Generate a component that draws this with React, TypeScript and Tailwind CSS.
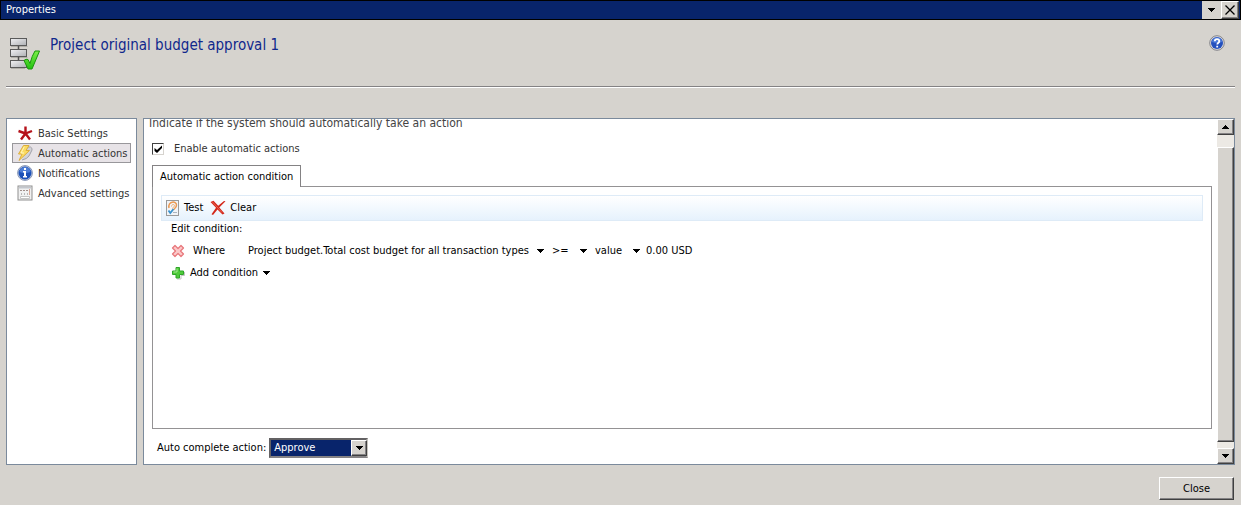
import type { ReactNode } from 'react';

const raised =
  'border border-t-white border-l-white border-r-[#404040] border-b-[#404040] bg-[#d6d3ce] shadow-[inset_-1px_-1px_0_#848284]';

function Caret({ up = false }: { up?: boolean }) {
  return (
    <svg width="7" height="4" viewBox="0 0 7 4" shapeRendering="crispEdges" aria-hidden="true" className="shrink-0">
      <path d={up ? 'M3 0h1v1h1v1h1v1h1v1H0V3h1V2h1V1h1z' : 'M0 0h7v1H6v1H5v1H4v1H3V3H2V2H1V1H0z'} fill="#000" />
    </svg>
  );
}

function WorkflowIcon() {
  return (
    <svg width="33" height="34" viewBox="0 0 33 34" aria-hidden="true" className="shrink-0">
      <defs>
        <linearGradient id="box" x1="0" y1="0" x2="1" y2="1">
          <stop offset="0" stopColor="#f2f2f4" />
          <stop offset="1" stopColor="#aeb0b4" />
        </linearGradient>
        <linearGradient id="tick" x1="0" y1="0" x2="0" y2="1">
          <stop offset="0" stopColor="#7df04a" />
          <stop offset="1" stopColor="#22c010" />
        </linearGradient>
      </defs>
      <path d="M2 8.500h16.500M2 19.500h16.500M2 30.500h14" stroke="#b0aea8" />
      <path d="M9.500 8v3M9.500 19v3" stroke="#4f4f4f" strokeWidth="1.500" />
      <rect x="1.500" y="0.500" width="16" height="7" fill="url(#box)" stroke="#5a5a5a" />
      <rect x="1.500" y="11.500" width="16" height="7" fill="url(#box)" stroke="#5a5a5a" />
      <rect x="1.500" y="22.500" width="16" height="7" fill="url(#box)" stroke="#5a5a5a" />
      <path d="M15 22.500q2-2 4-1l2 4q2-8 5-12.500h4.500l-7.500 18h-4z" fill="url(#tick)" stroke="#1a960d" strokeLinejoin="round" />
    </svg>
  );
}

function HelpIcon() {
  return (
    <svg width="16" height="16" viewBox="0 0 16 16" aria-hidden="true">
      <circle cx="8" cy="8" r="7.300" fill="#dcdce0" stroke="#85858a" />
      <circle cx="8" cy="8" r="6" fill="#2450bd" />
      <path d="M3 7a5 4.500 0 0 1 10 0q-5 2-10 0z" fill="#5b8ae6" opacity=".7" />
      <path d="M5.800 6.200c0-2.800 4.500-2.800 4.500 0 0 1.500-2 1.600-2 3.300M8.200 10.800v1.700" fill="none" stroke="#fff" strokeWidth="1.800" />
    </svg>
  );
}

function AsteriskIcon() {
  return (
    <svg width="16" height="16" viewBox="0 0 16 16" aria-hidden="true" className="shrink-0">
      <path d="M8.500 9V1.500M8.500 8.500L1.500 6M8.500 8.500L15 6M8.500 8.500L4 14.500M8.500 8.500L13 14.500" stroke="#b5121b" strokeWidth="2.400" />
    </svg>
  );
}

function BoltIcon() {
  return (
    <svg width="16" height="16" viewBox="0 0 16 16" aria-hidden="true" className="shrink-0">
      <path d="M10 2l3.500 0q2 1 1.500 3l-3 6q-2 3-7 4" fill="#d3d3d8" stroke="#a2a2aa" />
      <path d="M6.500.500h5.500L9 5.500h3.500L2 15.500 5 9H1.500z" fill="#fbdc62" stroke="#dcae3c" strokeLinejoin="round" />
      <path d="M7.300 1.600L4 8h3" fill="none" stroke="#fff6c4" />
    </svg>
  );
}

function InfoIcon() {
  return (
    <svg width="16" height="16" viewBox="0 0 16 16" aria-hidden="true" className="shrink-0">
      <circle cx="8" cy="8" r="7.400" fill="#c9d3e6" stroke="#8795b5" />
      <circle cx="8" cy="8" r="6.500" fill="#1c51b8" />
      <path d="M2.500 7a5.500 5 0 0 1 11 0q-5.500 2-11 0z" fill="#6d9ae8" opacity=".6" />
      <path d="M7 3h2v2H7zM6 6h3v5h1v1.500H6V11h1V7.500H6z" fill="#fff" />
    </svg>
  );
}

function FormIcon() {
  return (
    <svg width="16" height="16" viewBox="0 0 16 16" aria-hidden="true" className="shrink-0">
      <rect x="1" y="1" width="14" height="14" fill="#f1f1f1" stroke="#8f8f8f" />
      <path d="M2 2.500h12" stroke="#c3c6cc" strokeWidth="2" />
      <path d="M3 5.500h2M6 5.500h2M9 5.500h2" stroke="#a08e8a" />
      <path d="M4.500 8v2M7.500 8v2M10.500 8v2" stroke="#b9b9b9" />
      <path d="M12.500 4v6" stroke="#dba593" />
      <path d="M3.500 11.500h9v2h-9z" fill="#fff" stroke="#c4c4c4" />
    </svg>
  );
}

function TestIcon() {
  return (
    <svg width="14" height="16" viewBox="0 0 14 16" aria-hidden="true" className="shrink-0">
      <rect x=".5" y=".5" width="12" height="15" fill="#f1f4f8" stroke="#9a9a9a" />
      <path d="M3 8c-1.500-7 7.500-7.500 7.500-3 0 3.500-3 3-2.500 5" fill="none" stroke="#ec9a52" strokeWidth="1.500" />
      <path d="M5.500 6.500c0-2.500 3-2.500 3-.8s-2 1.300-2 2.800" fill="none" stroke="#f0ad72" />
      <path d="M2.500 10.500l1.800 2.500L7.500 9" fill="none" stroke="#3a93cf" strokeWidth="1.800" />
      <path d="M7 12.500h4" stroke="#a9b4c0" />
    </svg>
  );
}

function ClearIcon() {
  return (
    <svg width="16" height="16" viewBox="0 0 16 16" aria-hidden="true" className="shrink-0">
      <path d="M.5 2l3-1.200 4.700 5L14 1l1.500.2L9.300 7.500 14.500 13.500l-2 1L7.500 9.400 3 15l-1.500-.8L6 7.800z" fill="#d3281b" />
      <path d="M2.500 2l9.500 10.500" stroke="#ea6450" />
    </svg>
  );
}

function RemoveIcon() {
  return (
    <svg width="14" height="14" viewBox="0 0 14 14" aria-hidden="true">
      <path
        d="M4 1.500l3 3 3-3 2.500 2.500-3 3 3 3L10 12.500l-3-3-3 3L1.500 10l3-3-3-3z"
        fill="#fbc9c9"
        stroke="#e8777b"
        strokeWidth="1.200"
        strokeLinejoin="round"
      />
    </svg>
  );
}

function AddIcon() {
  return (
    <svg width="14" height="14" viewBox="0 0 14 14" aria-hidden="true">
      <path d="M6 13h4V9.500h3.500V6" fill="none" stroke="#c4c4c4" />
      <path d="M5 1.500h3.500V5H12.500v3.500H8.500V12H5V8.500H1.500V5H5z" fill="#4fcb3a" stroke="#2fa528" strokeLinejoin="round" />
      <path d="M6 2.500v3.500H2.500" fill="none" stroke="#a5ec92" />
    </svg>
  );
}

function NavItem({ icon, children, active = false }: { icon: ReactNode; children: ReactNode; active?: boolean }) {
  return (
    <li>
      <a
        href="#"
        aria-current={active ? 'page' : undefined}
        className={`flex h-5 items-center gap-[5px] border pl-1 ${
          active ? 'border-[#98979b] bg-[#e7e3e7]' : 'border-transparent'
        }`}
      >
        {icon}
        <span className="pt-0.5 whitespace-nowrap">{children}</span>
      </a>
    </li>
  );
}

function Picker({ children, label, className = '' }: { children: ReactNode; label: string; className?: string }) {
  return (
    <button type="button" aria-label={label} className={`flex items-center justify-between whitespace-nowrap ${className}`}>
      {children}
      <Caret />
    </button>
  );
}

export default function App() {
  return (
    <div className="flex min-h-screen flex-col bg-[#d6d3ce] font-['DejaVu_Sans_Condensed','DejaVu_Sans',sans-serif] text-[11px] leading-4 text-black">
      <header className="flex h-5 items-center justify-between border border-black bg-[#08246b] pr-px pl-[5px] text-white">
        <h1>Properties</h1>
        <div className="flex h-full">
          <button type="button" aria-label="Window menu" className="flex w-[19px] items-center justify-center bg-[#d6d3ce]">
            <Caret />
          </button>
          <button type="button" aria-label="Close window" className={`flex w-[18px] items-center justify-center ${raised}`}>
            <svg width="10" height="10" viewBox="0 0 10 10" aria-hidden="true">
              <path d="M.5.5l9 9M9.500.5l-9 9" stroke="#000" strokeWidth="1.300" />
            </svg>
          </button>
        </div>
      </header>

      <section className="mx-[6px] flex h-[68px] items-start justify-between border-b border-white pt-[15px] pr-[10px] pl-[3px] shadow-[inset_0_-1px_0_#848284]">
        <div className="flex gap-2">
          <div className="pt-[3px]">
            <WorkflowIcon />
          </div>
          <h2 className="text-[15px] leading-5 text-[#10288c]">Project original budget approval 1</h2>
        </div>
        <button type="button" aria-label="Help">
          <HelpIcon />
        </button>
      </section>

      <main className="mx-[6px] mt-[30px] flex flex-1 gap-[6px]">
        <nav aria-label="Settings" className="w-[131px] shrink-0 border border-[#7b8a9c] bg-white px-[5px] py-1 text-[#333]">
          <ul>
            <NavItem icon={<AsteriskIcon />}>Basic Settings</NavItem>
            <NavItem icon={<BoltIcon />} active>
              Automatic actions
            </NavItem>
            <NavItem icon={<InfoIcon />}>Notifications</NavItem>
            <NavItem icon={<FormIcon />}>Advanced settings</NavItem>
          </ul>
        </nav>

        <div className="flex min-w-0 flex-1 overflow-hidden border border-[#7b8a9c] bg-white">
          <div className="flex min-w-0 flex-1 flex-col pr-[5px] pb-[6px] pl-[5px]">
            <p className="-mt-1 text-xs text-[#444]">Indicate if the system should automatically take an action</p>
            <label className="mt-[10px] ml-[3px] flex items-center gap-[10px] self-start text-[#333]">
              <span className="grid">
                <input
                  type="checkbox"
                  defaultChecked
                  className="peer col-start-1 row-start-1 size-3 appearance-none border border-t-[#404040] border-r-[#d6d3ce] border-b-[#d6d3ce] border-l-[#404040] bg-white"
                />
                <svg
                  width="12"
                  height="12"
                  viewBox="0 0 12 12"
                  aria-hidden="true"
                  className="pointer-events-none invisible col-start-1 row-start-1 peer-checked:visible"
                >
                  <path d="M2.500 5v3L5 10l5-5V2.500L5 7z" fill="#000" />
                </svg>
              </span>
              Enable automatic actions
            </label>

            <div role="tablist" className="z-10 mt-2 ml-[3px] flex">
              <button
                type="button"
                role="tab"
                aria-selected="true"
                className="-mb-px h-[22px] border border-b-0 border-[#848284] bg-white px-[7px] whitespace-nowrap"
              >
                Automatic action condition
              </button>
            </div>
            <div role="tabpanel" className="ml-[3px] flex-1 border border-[#949294] px-2 pt-2">
              <div className="flex h-[26px] items-center gap-[7px] border border-[#deebf7] bg-linear-to-b from-white to-[#e6f2fd] px-1">
                <button type="button" className="flex items-center gap-1">
                  <TestIcon />
                  Test
                </button>
                <button type="button" className="flex items-center gap-1">
                  <ClearIcon />
                  Clear
                </button>
              </div>
              <p className="pl-[10px]">Edit condition:</p>
              <div className="mt-[6px] flex h-4 items-center pl-[10px]">
                <button type="button" aria-label="Remove condition">
                  <RemoveIcon />
                </button>
                <span className="w-[63px] pl-2">Where</span>
                <Picker label="Field" className="w-[296px]">
                  Project budget.Total cost budget for all transaction types
                </Picker>
                <Picker label="Operator" className="ml-2 w-[35px]">
                  &gt;=
                </Picker>
                <Picker label="Value type" className="ml-2 w-[45px]">
                  value
                </Picker>
                <span className="ml-[6px]">0.00 USD</span>
              </div>
              <div className="mt-[6px] flex h-4 items-center pl-[10px]">
                <button type="button" className="flex items-center gap-[5px]">
                  <AddIcon />
                  Add condition
                  <Caret />
                </button>
              </div>
            </div>

            <div className="mt-[9px] ml-2 flex items-center gap-[3px]">
              <label htmlFor="auto-action">Auto complete action:</label>
              <div className="relative">
                <select
                  id="auto-action"
                  defaultValue="approve"
                  className="block h-5 w-[99px] appearance-none border-2 border-t-[#636163] border-r-[#c6c3bd] border-b-[#848284] border-l-[#636163] bg-[#08246b] pl-[3px] leading-4 text-white"
                >
                  <option value="approve">Approve</option>
                  <option value="reject">Reject</option>
                </select>
                <span className={`pointer-events-none absolute top-[2px] right-px flex h-4 w-4 items-center justify-center ${raised}`}>
                  <Caret />
                </span>
              </div>
            </div>
          </div>

          <div role="presentation" className="flex w-[17px] shrink-0 flex-col bg-[#ece9e4]">
            <button type="button" aria-label="Scroll up" className={`flex h-4 items-center justify-center ${raised}`}>
              <Caret up />
            </button>
            <div className={`mt-3 mb-[6px] flex-1 ${raised}`} />
            <button type="button" aria-label="Scroll down" className={`flex h-4 items-center justify-center ${raised}`}>
              <Caret />
            </button>
          </div>
        </div>
      </main>

      <footer className="flex justify-end px-[7px] pt-3 pb-[5px]">
        <button type="button" className={`h-[23px] w-[75px] ${raised}`}>
          Close
        </button>
      </footer>
    </div>
  );
}
